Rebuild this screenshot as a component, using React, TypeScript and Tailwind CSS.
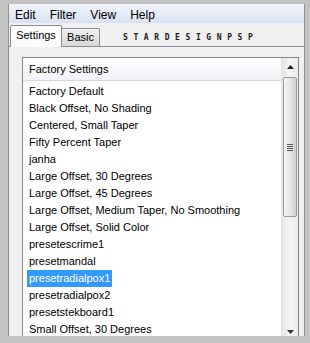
import React from 'react';

const presets = [
  'Factory Default',
  'Black Offset, No Shading',
  'Centered, Small Taper',
  'Fifty Percent Taper',
  'janha',
  'Large Offset, 30 Degrees',
  'Large Offset, 45 Degrees',
  'Large Offset, Medium Taper, No Smoothing',
  'Large Offset, Solid Color',
  'presetescrime1',
  'presetmandal',
  'presetradialpox1',
  'presetradialpox2',
  'presetstekboard1',
  'Small Offset, 30 Degrees',
];

const selected = 'presetradialpox1';

function Arrow({ down }: { down?: boolean }) {
  return (
    <svg width="7" height="4" viewBox="0 0 7 4">
      {down ? <path d="M0 0h7L3.5 4z" fill="#333" /> : <path d="M0 4h7L3.5 0z" fill="#222" />}
    </svg>
  );
}

function ScrollBar() {
  return (
    <div className="w-[17px] shrink-0 flex flex-col bg-gradient-to-r from-[#e6e6e6] via-[#f4f4f4] to-[#ececec] border-l border-[#e3e3e3]">
      <div className="h-[17px] flex items-center justify-center">
        <Arrow />
      </div>
      <div className="h-[2px]" />
      <div className="h-[140px] mx-px rounded-[2px] border border-[#9b9b9b] bg-gradient-to-r from-[#f4f4f4] via-[#e6e6e6] to-[#cfcfcf] flex items-center justify-center">
        <div className="flex flex-col gap-px">
          <div className="w-[6px] h-px bg-[#5a5a5a]" />
          <div className="w-[6px] h-px bg-[#5a5a5a]" />
          <div className="w-[6px] h-px bg-[#5a5a5a]" />
          <div className="w-[6px] h-px bg-[#5a5a5a]" />
        </div>
      </div>
      <div className="flex-1" />
      <div className="h-[17px] flex items-center justify-center">
        <Arrow down />
      </div>
    </div>
  );
}

export default function App() {
  return (
    <div
      className="w-[310px] h-[343px] bg-[#c2c2c2] pt-[4px] pl-[8px] pr-[5px] pb-[7px] flex flex-col overflow-hidden text-black"
      style={{ fontFamily: '"Liberation Sans", Arial, sans-serif' }}
    >
      <div className="flex-1 min-h-0 flex flex-col bg-[#f0f0f0] border-l border-r border-[#8f8f8f] overflow-hidden">
        {/* menu bar */}
        <div className="h-[19px] shrink-0 flex items-center pt-[3px] pl-[6px] gap-[14px] text-[12px] bg-gradient-to-b from-[#f1f4fa] to-[#d9e1f1]">
          <span>Edit</span>
          <span>Filter</span>
          <span>View</span>
          <span>Help</span>
        </div>

        {/* tabs */}
        <div className="h-[24px] shrink-0 flex items-end pl-px border-b border-[#898c95]">
          <div className="relative z-10 w-[52px] h-[22px] -mb-px bg-[#fcfcfc] border border-b-0 border-[#898c95] rounded-t-[2px] flex items-center justify-center text-[11px] pb-[2px]">
            Settings
          </div>
          <div className="w-[38px] h-[18px] bg-gradient-to-b from-[#f0f0f0] to-[#d8d8d8] border border-l-0 border-b-0 border-[#898c95] rounded-tr-[2px] flex items-center justify-center text-[11px]">
            Basic
          </div>
          <div
            className="self-center ml-[23px] mt-[6px] text-[8px] font-bold leading-none tracking-[5.6px] text-[#1a1a1a]"
            style={{ fontFamily: '"DejaVu Sans Mono", monospace' }}
          >
            STARDESIGNPSP
          </div>
        </div>

        {/* tab panel */}
        <div className="flex-1 min-h-0 pt-[10px] pl-[13px]">
          <div className="w-[277px] h-[284px] border border-[#828790] bg-white flex">
            <div className="flex-1 min-w-0 flex flex-col overflow-hidden">
              <div className="h-[23px] shrink-0 border-b border-[#d5d9e0] bg-gradient-to-b from-white to-[#f1f3f6] flex items-center pl-[6px] text-[11px]">
                Factory Settings
              </div>
              <div className="pt-[2px] pl-[4px] text-[11px]">
                {presets.map(p => (
                  <div key={p} className="h-[17px] flex items-center whitespace-nowrap">
                    <span
                      className={
                        p === selected
                          ? 'h-[17px] flex items-center px-[2px] bg-[#3399ff] text-white'
                          : 'h-[17px] flex items-center px-[2px]'
                      }
                    >
                      {p}
                    </span>
                  </div>
                ))}
              </div>
            </div>
            <ScrollBar />
          </div>
        </div>
      </div>
    </div>
  );
}
